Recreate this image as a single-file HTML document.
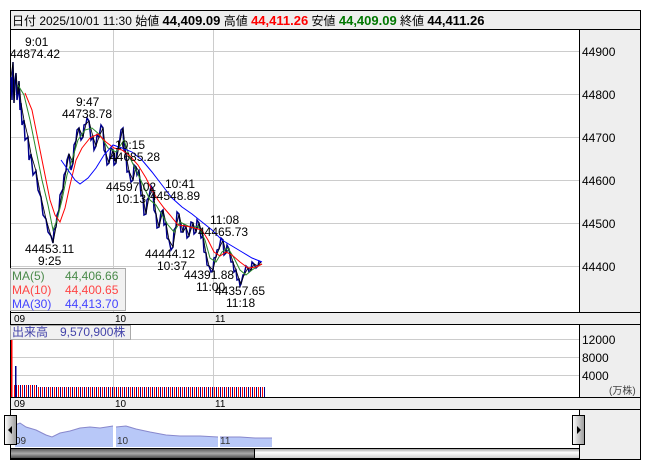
<!DOCTYPE html>
<html><head><meta charset="utf-8"><style>
html,body{margin:0;padding:0;background:#fff;width:653px;height:470px;overflow:hidden}
svg{display:block;font-family:"Liberation Sans","Noto Sans CJK JP",sans-serif}
</style></head><body>
<svg width="653" height="470" viewBox="0 0 653 470" xmlns="http://www.w3.org/2000/svg">
<defs>
<linearGradient id="sb" x1="0" y1="0" x2="0" y2="1"><stop offset="0" stop-color="#555"/><stop offset="0.5" stop-color="#aaa"/><stop offset="1" stop-color="#444"/></linearGradient>
<linearGradient id="sb2" x1="0" y1="0" x2="0" y2="1"><stop offset="0" stop-color="#999"/><stop offset="0.4" stop-color="#fff"/><stop offset="1" stop-color="#ccc"/></linearGradient>
<linearGradient id="btn" x1="0" y1="0" x2="1" y2="0"><stop offset="0" stop-color="#fff"/><stop offset="1" stop-color="#999"/></linearGradient>
<pattern id="vb" width="4" height="20" patternUnits="userSpaceOnUse"><rect x="0" width="1" height="20" fill="#00008b"/><rect x="2" width="1" height="20" fill="#f00"/></pattern>
</defs>
<rect x="10.5" y="10.5" width="630" height="19" fill="#eee" stroke="#000"/>
<text y="25" font-size="12"><tspan x="12" fill="#000">日付 2025/10/01 11:30 始値 </tspan><tspan font-weight="bold" font-size="13">44,409.09</tspan><tspan> 高値 </tspan><tspan font-weight="bold" fill="#f00" font-size="13">44,411.26</tspan><tspan> 安値 </tspan><tspan font-weight="bold" fill="#070" font-size="13">44,409.09</tspan><tspan> 終値 </tspan><tspan font-weight="bold" font-size="13">44,411.26</tspan></text>
<rect x="10.5" y="29.5" width="630" height="430" fill="#fff" stroke="#000"/>
<rect x="579.5" y="29.5" width="61" height="283" fill="#eee" stroke="#000"/>
<rect x="10.5" y="312.5" width="630" height="12" fill="#eee" stroke="#000"/>
<rect x="579.5" y="324.5" width="61" height="73" fill="#eee" stroke="#000"/>
<rect x="10.5" y="397.5" width="630" height="12" fill="#eee" stroke="#000"/>
<rect x="579.5" y="409.5" width="61" height="50" fill="#eee" stroke="#000"/>
<g stroke="#ccc" stroke-width="1">
<line x1="11" y1="51.5" x2="579" y2="51.5"/><line x1="11" y1="94.5" x2="579" y2="94.5"/><line x1="11" y1="137.5" x2="579" y2="137.5"/><line x1="11" y1="180.5" x2="579" y2="180.5"/><line x1="11" y1="223.5" x2="579" y2="223.5"/><line x1="11" y1="266.5" x2="579" y2="266.5"/>
<line x1="113.5" y1="30" x2="113.5" y2="312"/><line x1="213.5" y1="30" x2="213.5" y2="312"/>
<line x1="11" y1="339.5" x2="579" y2="339.5"/><line x1="11" y1="357.5" x2="579" y2="357.5"/><line x1="11" y1="375.5" x2="579" y2="375.5"/>
<line x1="113.5" y1="325" x2="113.5" y2="397"/><line x1="213.5" y1="325" x2="213.5" y2="397"/>
</g>
<g font-size="12" fill="#000">
<text x="582" y="56">44900</text><text x="582" y="99">44800</text><text x="582" y="142">44700</text><text x="582" y="185">44600</text><text x="582" y="228">44500</text><text x="582" y="271">44400</text>
<text x="582" y="344">12000</text><text x="582" y="362">8000</text><text x="582" y="380">4000</text>
<text x="609" y="394" font-size="10" fill="#444">(万株)</text>
</g>
<g font-size="10" fill="#000"><text x="14" y="322">09</text><text x="115" y="322">10</text><text x="215" y="322">11</text>
<text x="14" y="407">09</text><text x="115" y="407">10</text><text x="215" y="407">11</text></g>
<polyline fill="none" stroke="#00008b" stroke-width="1.5" points="11,77 12,100 13,62 14,103 15,80 16,73 17,100 18,94 19,81 20,110 21,103 22,125 24,120 25,140 28,137 29,160 31,154 33,175 36,171 38,190 41,197 43,215 46,219 48,232 51,236 53,243 54,230 56,227 57,215 59,210 60,195 63,189 64,175 66,171 67,160 69,154 71,170 73,163 74,145 76,141 77,130 79,128 81,140 83,137 84,125 86,124 87,118 89,121 91,140 93,137 94,150 96,146 97,135 99,137 101,125 103,128 104,150 106,154 107,165 109,163 111,148 113,150 114,165 116,163 117,150 119,146 121,130 123,128 124,150 126,154 127,172 129,171 131,182 133,180 134,165 136,167 137,175 139,171 141,195 143,197 144,215 146,214 147,200 149,197 151,186 153,189 154,210 156,214 157,228 159,227 161,212 163,210 164,225 166,223 167,238 169,240 171,250 173,247 174,230 176,227 177,212 179,214 181,232 183,232 184,225 186,227 187,238 189,236 191,222 193,223 194,234 196,232 197,220 199,223 201,238 203,236 204,252 206,253 207,265 209,266 211,272 213,270 214,258 216,257 217,250 219,249 221,238 223,240 224,255 226,253 227,245 229,249 231,262 233,262 234,272 236,270 237,280 239,279 240,286 241,284 243,275 244,275 246,266 248,268 249,272 251,270 252,262 254,264 256,268 258,266 259,261 261,262"/>
<polyline fill="none" stroke="#000" stroke-width="0.8" points="11,77 13,62 14,103 16,73 18,94 19,81 21,103 24,120 28,137 31,154 36,171 41,197 46,219 51,236 53,243 56,227 59,210 63,189 66,171 69,154 73,163 76,141 79,128 83,137 86,124 89,121 93,137 96,146 99,137 103,128 106,154 109,163 113,150 116,163 119,146 123,128 126,154 129,171 133,180 136,167 139,171 143,197 146,214 149,197 153,189 156,214 159,227 163,210 166,223 169,240 173,247 176,227 179,214 183,232 186,227 189,236 193,223 196,232 199,223 203,236 206,253 209,266 213,270 216,257 219,249 223,240 226,253 229,249 233,262 236,270 239,279 241,284 244,275 248,268 251,270 254,264 258,266 261,262"/>
<polyline fill="none" stroke="#2a8a2a" stroke-width="1" points="18,85 24,95 30,120 36,150 42,180 48,205 53,230 57,220 62,200 67,175 72,160 78,140 85,130 92,128 100,135 108,148 116,152 124,140 130,158 137,172 143,185 150,200 156,205 162,215 168,225 174,232 180,222 186,225 192,228 198,226 205,240 210,258 216,262 222,252 228,248 234,258 240,270 246,275 252,270 258,266 262,264"/>
<polyline fill="none" stroke="#f00" stroke-width="1" points="25,93 32,110 38,140 44,170 50,200 55,215 60,222 65,208 70,185 76,160 82,148 90,138 98,134 106,142 114,148 122,150 130,156 138,165 146,178 152,190 158,200 164,208 170,215 178,225 186,226 194,228 202,230 208,240 214,252 220,256 226,252 232,255 240,262 248,268 256,267 262,264"/>
<polyline fill="none" stroke="#00f" stroke-width="1" points="61,160 68,170 75,180 80,184 88,178 96,168 104,155 113,145 122,148 132,152 142,160 152,172 162,185 172,198 182,207 192,214 202,222 212,230 222,240 232,246 242,252 252,258 262,262"/>
<g font-size="12" fill="#000">
<text x="25" y="46">9:01</text><text x="10" y="58">44874.42</text>
<text x="76" y="106">9:47</text><text x="62" y="118">44738.78</text>
<text x="115" y="149">10:15</text><text x="110" y="161">44685.28</text>
<text x="106" y="191">44597.02</text><text x="116" y="203">10:13</text>
<text x="165" y="188">10:41</text><text x="150" y="200">44548.89</text>
<text x="210" y="224">11:08</text><text x="198" y="236">44465.73</text>
<text x="25" y="253">44453.11</text><text x="38" y="265">9:25</text>
<text x="145" y="258">44444.12</text><text x="157" y="270">10:37</text>
<text x="184" y="279">44391.88</text><text x="196" y="291">11:00</text>
<text x="215" y="295">44357.65</text><text x="226" y="307">11:18</text>
</g>
<rect x="10.5" y="268.5" width="115" height="42" fill="#eee" fill-opacity="0.85" stroke="#aaa"/>
<g font-size="12"><text x="12" y="280" fill="#4a8a4a">MA(5)</text><text x="65" y="280" fill="#4a8a4a">44,406.66</text>
<text x="12" y="294" fill="#f44">MA(10)</text><text x="65" y="294" fill="#f44">44,400.65</text>
<text x="12" y="308" fill="#44f">MA(30)</text><text x="65" y="308" fill="#44f">44,413.70</text></g>
<rect x="11" y="340" width="1.5" height="57" fill="#f00"/>
<rect x="15" y="366" width="1.5" height="31" fill="#00008b"/>
<rect x="13" y="385" width="24" height="12" fill="url(#vb)"/>
<rect x="37" y="387" width="228" height="10" fill="url(#vb)"/>
<rect x="10.5" y="325.5" width="120" height="14" fill="#eee" fill-opacity="0.85" stroke="#aaa"/>
<text x="12" y="336" font-size="12" fill="#44a">出来高　9,570,900株</text>
<path d="M15,425 L20,423 26,427 36,430 46,435 52,437 60,433 70,431 80,428 90,427 100,428 113,426 113,447 15,447Z" fill="#b8c8f8"/>
<path d="M116,427 L126,426 136,429 150,432 166,435 180,436 200,436 218,437 218,447 116,447Z" fill="#b8c8f8"/>
<path d="M220,437 L240,437 255,438 272,438 272,447 220,447Z" fill="#b8c8f8"/>
<polyline fill="none" stroke="#8888cc" points="15,425 20,423 26,427 36,430 46,435 52,437 60,433 70,431 80,428 90,427 100,428 113,426"/>
<polyline fill="none" stroke="#8888cc" points="116,427 126,426 136,429 150,432 166,435 180,436 200,436 218,437"/>
<polyline fill="none" stroke="#8888cc" points="220,437 240,437 255,438 272,438"/>
<g font-size="10" fill="#333"><text x="15" y="444">09</text><text x="117" y="444">10</text><text x="220" y="444">11</text></g>
<rect x="4.5" y="415.5" width="12" height="29" fill="url(#btn)" stroke="#000"/>
<path d="M8,430 L12,426 12,434Z" fill="#000"/>
<rect x="572.5" y="415.5" width="12" height="29" fill="url(#btn)" stroke="#000"/>
<path d="M581,430 L577,426 577,434Z" fill="#000"/>
<rect x="10.5" y="448.5" width="244" height="10" fill="url(#sb)" stroke="#000"/>
<rect x="254.5" y="448.5" width="325" height="10" fill="url(#sb2)" stroke="#000"/>
</svg>
</body></html>
